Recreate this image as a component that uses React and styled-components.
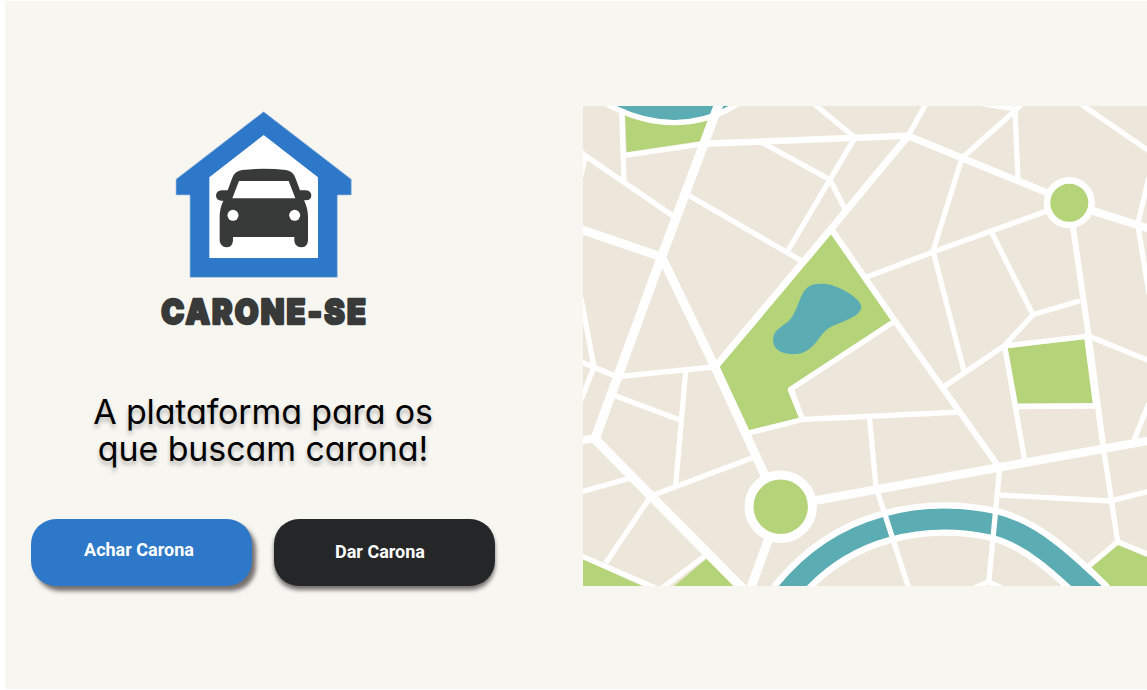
import React from "react";
import styled, { createGlobalStyle } from "styled-components";

const GlobalStyle = createGlobalStyle`
  * { box-sizing: border-box; }
  body { margin: 0; background: #fff; }
`;

const Page = styled.main`
  display: grid;
  grid-template-columns: 578px 564px;
  width: 1147px;
  height: 690px;
  border: solid #fff;
  border-width: 1px 0 1px 5px;
  background: #f7f6f1;
`;

const Intro = styled.section`
  display: flex;
  flex-direction: column;
  align-items: center;
  width: 516px;
  padding-top: 99px;
`;

const Logo = styled.svg`
  display: block;
  flex: none;
  width: 230px;
  height: 240px;
  margin-left: 4px;
  overflow: visible;
`;

const Wordmark = styled.text`
  font-family: Inter, "Liberation Sans", sans-serif;
  font-size: 101px;
  font-weight: 900;
  letter-spacing: 7px;
  fill: #383a39;
  stroke: #383a39;
  stroke-width: 7px;
  stroke-linejoin: round;
`;

const Headline = styled.h1`
  display: flex;
  flex-direction: column;
  align-items: center;
  margin: 53px 0 0;
  font: 400 34px/37px Inter, "Open Sans", sans-serif;
  font-feature-settings: "cv11";
  color: #000;
  text-shadow: 0 4px 4px rgba(0, 0, 0, 0.25);
  white-space: nowrap;
`;

const Line = styled.span`
  letter-spacing: ${(p) => p.$tracking};
`;

const Actions = styled.div`
  display: flex;
  gap: 22px;
  margin-top: 52px;
`;

const Button = styled.button`
  width: 221px;
  height: 67px;
  padding: 0 ${(p) => p.$padRight} ${(p) => p.$padBottom} 0;
  border: 0;
  border-radius: 25px;
  background: ${(p) => p.$color};
  color: #fff;
  font: 700 18px/21px Roboto, sans-serif;
  box-shadow: ${(p) => p.$shadow} 4px #777170;
`;

const MapFrame = styled.div`
  padding-top: 105px;
`;

const MapArt = styled.svg`
  display: block;
  width: 564px;
  height: 480px;
  background: #ede6da;
`;

const minorRoads = [
  "M621.7 109L624 181",
  "M625 155.3L703 144",
  "M580 150.5L585 155.5L673 216",
  "M585 158L579 184",
  "M688 195L801.7 261",
  "M581 298L594 367L581 400",
  "M580 361.5L617 376.7L713 367",
  "M615 395.7L680 420",
  "M685.7 371L675.7 485",
  "M651 496L755 456.7",
  "M580 492L631.7 477.7",
  "M651 496L605.7 563",
  "M578 554.5L660 590",
  "M706 555L662 588",
  "M813 103L855 137.7L830 179.7L787.7 251",
  "M761 142L830 179.7L845 209",
  "M927 102L908 136",
  "M790 389L802.5 419.5L961.7 412",
  "M895 321L791 389L802.5 419.5L749 433",
  "M866.7 277L933 252L1047 211",
  "M962 158L933 251L964 371",
  "M962 158L1015 110.7L1025 101",
  "M1015 110L1018 180",
  "M983 104L1015 109",
  "M1078 102L1150 151.7",
  "M1149 177L1137.7 224.7L1149 294",
  "M992 233L1033 314.7L1080 300.7",
  "M1033 314.7L1004 346L945 386",
  "M1004 346L1088.7 336L1150 361",
  "M1004.7 346.7L1025 462",
  "M1018 406.5L1095 406",
  "M1134 440L1149 403",
  "M1000 495L1110 501L1150 491",
  "M1103.7 450L1117.7 541.7L1150 555",
  "M1117.7 541.7L1085 569",
  "M988.7 582L972 589M988.7 582L1004 589",
];

const mainRoads = [
  [9.4, "M720 101L661.7 256.3L595 439L651 496L745 591"],
  [8.8, "M578 228.5L661.7 257L715 367L767 480"],
  [8, "M578 441L596 438"],
  [7, "M715 367L831 229L908 136"],
  [6.5, "M704 143.7L775 141L908 135.7"],
  [7, "M908 135.7L962 158L1050 194"],
  [8, "M1090 210L1150 229"],
  [6.2, "M831 229L895 321L998.7 466.7"],
  [6, "M1072.7 225L1088.7 336L1103.7 450"],
  [8.5, "M810 501.5L998.7 467.5L1150 440.5"],
  [9, "M770 535L750 590"],
];

const river =
  "M785 595C815 557 850 537 886 527C920 517.5 955 516 994 524.5C1030 533 1062 562 1098 597";

function HouseLogo() {
  return (
    <Logo viewBox="0 0 690 720">
      <path
        d="M341 35L604 238V285H562V532H120V285H78V238Z"
        fill="#2d78c9"
        stroke="#a9c3df"
        strokeWidth="2"
      />
      <path d="M341 105L504 232V474H178V232Z" fill="#fff" />
      <path
        fill="#383a39"
        d="M233 271L247 233Q254 214 276 210Q341 203 408 210Q429 214 436 233L450 271H468Q484 273 484 287Q483 300 468 301H462Q474 325 474 350V422Q472 441 453 442Q434 440 433 422V411H249V422Q247 441 229 442Q211 440 209 422V350Q209 325 220 302H214Q199 300 198 287Q199 272 215 271Z"
      />
      <path d="M267 243H416L436 295H247Z" fill="#fff" />
      <circle cx="249" cy="346" r="16.5" fill="#fff" />
      <circle cx="434" cy="346" r="16.5" fill="#fff" />
      <Wordmark x="34" y="671" textLength="620" lengthAdjust="spacingAndGlyphs">
        CARONE-SE
      </Wordmark>
    </Logo>
  );
}

function CityMap() {
  return (
    <MapArt viewBox="583 106 564 480">
      <g fill="#b5d379">
        <path d="M625 113Q665 128 708 120L701 141L626.7 152.3Z" />
        <path d="M830.7 233L892.3 319.7L787.7 388.3L800 418.3L749.3 430L719 366Z" />
        <path d="M1007.7 348L1084.7 339L1093.7 403L1018 403.5Z" />
        <path d="M583 559L642 586H583Z" />
        <path d="M674 586L706.7 558.7L735 587Z" />
        <path d="M1117.7 545L1147 557V586H1110L1091 567.7Z" />
      </g>
      <path d="M1086.5 336L1095.5 406" stroke="#fff" strokeWidth="5" />
      <path
        fill="#5badb3"
        d="M806.7 288C811 284 817 283.5 824 283.7C836 284.5 861 297 861.3 307C861 318 836 323 828 328.7C818 336 814 352 797 354C784 355 773 351 773 340C774 328 783 327 790 319.7C798 310 800 294 806.7 288Z"
      />
      <path d="M610 103Q640 120 675 120Q709 120 735 103Z" fill="#5badb3" />
      <path
        d="M603 102Q640 123 675 122.6Q712 122 742 101"
        fill="none"
        stroke="#fff"
        strokeWidth="5.4"
      />
      <path d={river} fill="none" stroke="#fff" strokeWidth="33.6" />
      <path d={river} fill="none" stroke="#5badb3" strokeWidth="21" />
      <g fill="none" stroke="#fff" strokeWidth="5.3">
        {minorRoads.map((d) => (
          <path key={d} d={d} />
        ))}
        <path d="M869.3 416L876 487L909 589" />
        <path d="M999.7 468L988.7 583" />
      </g>
      <g fill="none" stroke="#fff">
        {mainRoads.map(([width, d]) => (
          <path key={d} d={d} strokeWidth={width} />
        ))}
      </g>
      <circle cx="1069.3" cy="202.7" r="22.3" fill="#b5d379" stroke="#fff" strokeWidth="6.6" />
      <circle cx="780.7" cy="506.7" r="31.7" fill="#b5d379" stroke="#fff" strokeWidth="9" />
    </MapArt>
  );
}

export default function App() {
  return (
    <>
      <GlobalStyle />
      <Page>
        <Intro>
          <HouseLogo />
          <Headline>
            <Line $tracking="-0.15px">A plataforma para os</Line>
            <Line $tracking="-0.1px">que buscam carona!</Line>
          </Headline>
          <Actions>
            <Button $color="#2d78c9" $padRight="5px" $padBottom="6px" $shadow="4px 5px">
              Achar Carona
            </Button>
            <Button $color="#252628" $padRight="9px" $padBottom="2px" $shadow="0 4px">
              Dar Carona
            </Button>
          </Actions>
        </Intro>
        <MapFrame>
          <CityMap />
        </MapFrame>
      </Page>
    </>
  );
}
